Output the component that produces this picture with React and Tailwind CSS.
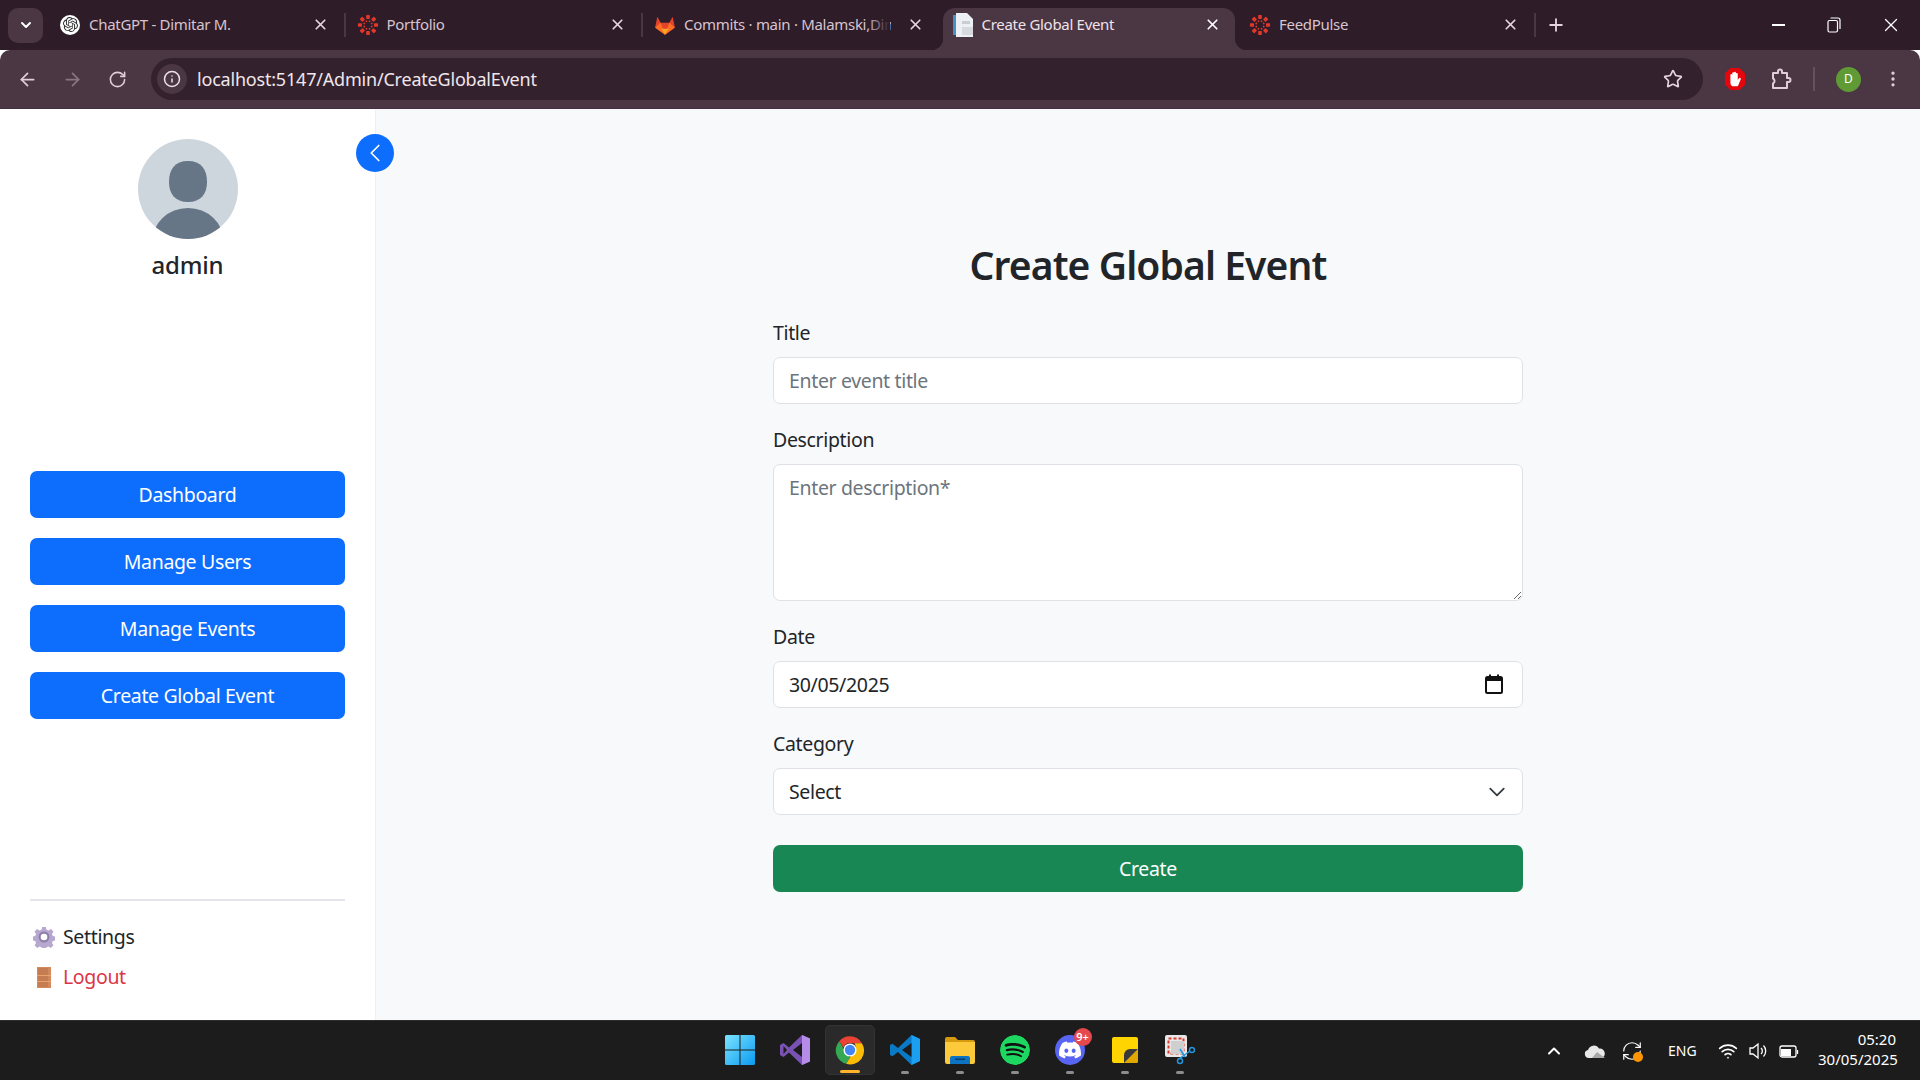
import { ArrowLeft, ArrowRight, RotateCw, RefreshCw, Info, Star, EllipsisVertical, ChevronDown, ChevronLeft, ChevronUp, X, Plus, Wifi } from 'lucide-react'
import { SiOpenai, SiSpotify, SiDiscord } from 'react-icons/si'

function CanvasIcon() {
  const dots = [0, 45, 90, 135, 180, 225, 270, 315]
  return (
    <svg width="22" height="22" viewBox="0 0 24 24">
      {dots.map(a => (
        <rect key={a} x="10" y="1" width="4" height="4.5" rx="0.8" fill="#e2382b" transform={`rotate(${a} 12 12)`} />
      ))}
      {dots.map(a => (
        <circle key={a} cx="12" cy="7.6" r="1" fill="#e2382b" transform={`rotate(${a + 22.5} 12 12)`} />
      ))}
    </svg>
  )
}

function ChatIcon() {
  return (
    <div className="w-5 h-5 rounded-full bg-white flex items-center justify-center">
      <SiOpenai size={15} color="#2a2a2a" />
    </div>
  )
}

function GitlabIcon() {
  return (
    <svg width="22" height="22" viewBox="0 0 24 24">
      <path d="M12 22.5 1.2 14.6 3.6 3l3.7 6.5h9.4L20.4 3l2.4 11.6z" fill="#e24329" />
      <path d="M12 22.5 7.3 9.5 1.2 14.6 4 17z" fill="#fc6d26" />
      <path d="M12 22.5l4.7-13 6.1 5.1-2.8 2.4z" fill="#fc6d26" />
      <path d="M12 22.5 7.8 16h8.4z" fill="#fca326" />
    </svg>
  )
}

function DocIcon() {
  return (
    <svg width="20" height="24" viewBox="0 0 20 24">
      <rect x="0" y="2" width="6" height="20" fill="#4a90c8" />
      <path d="M3 0h11l6 6v18H3z" fill="#eef1f4" />
      <rect x="9" y="8" width="8" height="3" fill="#c8ced4" />
      <rect x="9" y="14" width="11" height="8" fill="#d6dade" />
    </svg>
  )
}

function Tab({ icon, title, active, fade }) {
  return (
    <div className="w-[297.5px] shrink-0 h-full flex items-center relative">
      {active && (
        <>
          <div className="absolute left-[3px] right-[2px] top-0 bottom-0 bg-[#4b3644] rounded-t-[12px]" />
          <div className="absolute left-[-9px] bottom-0 w-[12px] h-[12px] bg-[radial-gradient(circle_at_0_0,transparent_12px,#4b3644_12.5px)]" />
          <div className="absolute right-[-10px] bottom-0 w-[12px] h-[12px] bg-[radial-gradient(circle_at_100%_0,transparent_12px,#4b3644_12.5px)]" />
        </>
      )}
      <div className="relative flex items-center w-full pl-[11px] pr-[16px] pb-[9px]">
        <div className="w-[24px] flex justify-center shrink-0">{icon}</div>
        <span className={`ml-[7px] w-[207px] overflow-hidden whitespace-nowrap text-[15px] tracking-[-0.3px] ${active ? 'text-[#efe3ea]' : 'text-[#d8c4d0]'}`}>
          {title}
        </span>
        <X size={17} strokeWidth={2.4} className={`ml-auto ${active ? 'text-white' : 'text-[#e4d5de]'}`} />
      </div>
      {fade && <div className="absolute right-[50px] top-0 bottom-[9px] w-[24px] bg-gradient-to-r from-transparent to-[#2e1c28]" />}
    </div>
  )
}

function TabSep() {
  return <div className="w-[2px] h-[24px] bg-[#4b3644] -mx-[1px] mb-[9px] shrink-0" />
}

function TabStrip() {
  return (
    <div className="h-[50px] bg-[#2e1c28] flex items-center shrink-0">
      <div className="w-[35px] h-[42px] ml-[8px] mr-[4px] flex items-center">
        <div className="w-[35px] h-[35px] rounded-[10px] bg-[#4b3644] flex items-center justify-center">
          <ChevronDown size={16} strokeWidth={3} className="text-white" />
        </div>
      </div>
      <div className="flex items-end h-[42px] mt-[8px]">
        <div className="flex items-center h-full">
          <Tab icon={<ChatIcon />} title="ChatGPT - Dimitar M." />
          <TabSep />
          <Tab icon={<CanvasIcon />} title="Portfolio" />
          <TabSep />
          <Tab icon={<GitlabIcon />} title="Commits · main · Malamski,Dimitar" fade />
          <Tab icon={<DocIcon />} title="Create Global Event" active />
          <Tab icon={<CanvasIcon />} title="FeedPulse" />
          <TabSep />
        </div>
      </div>
      <Plus size={20} strokeWidth={2.2} className="text-[#e4d5de] ml-[11px]" />
      <div className="ml-auto flex items-center h-full">
        <div className="w-[56px] flex justify-center"><div className="w-[13px] h-[1.5px] bg-white" /></div>
        <div className="w-[56px] flex justify-center">
          <svg width="14" height="16" viewBox="0 0 14 16" fill="none" stroke="white" strokeWidth="1.2">
            <rect x="1" y="3.5" width="9.5" height="11.5" rx="1.5" />
            <path d="M3.5 1h7.5a2 2 0 0 1 2 2v9" />
          </svg>
        </div>
        <div className="w-[58px] flex justify-center"><X size={22} strokeWidth={1.3} className="text-white" /></div>
      </div>
    </div>
  )
}

function StopIcon() {
  return (
    <svg width="22" height="24" viewBox="0 0 24 26">
      <path d="M7 1h10l6 6v12l-6 6H7l-6-6V7z" fill="#e4060d" />
      <path d="M7 14V8.5a1 1 0 0 1 2 0V13V6.5a1 1 0 0 1 2 0V13V6a1 1 0 0 1 2 0v7V7.5a1 1 0 0 1 2 0V14l1.5-2a1.1 1.1 0 0 1 1.8 1.2L15.5 20a2 2 0 0 1-1.8 1H11a4 4 0 0 1-4-4z" fill="white" />
    </svg>
  )
}

function PuzzleIcon() {
  return (
    <svg width="24" height="24" viewBox="0 0 24 24" fill="none" stroke="#dfcdd8" strokeWidth="2" strokeLinejoin="round" className="ml-[23px]">
      <path d="M4 6h5V4.500a2 2 0 0 1 4 0V6h5v5h1.500a2 2 0 0 1 0 4H18v6H4v-4.500a2.500 2.500 0 0 0 1.500-2.500A2.500 2.500 0 0 0 4 11.500z" />
    </svg>
  )
}

function Toolbar() {
  return (
    <div className="h-[59px] bg-[#4b3644] border-b border-[#443040] rounded-t-[10px] flex items-center shrink-0">
      <ArrowLeft size={21} className="text-[#dfcdd8] ml-[17px]" />
      <ArrowRight size={21} className="text-[#8b7583] ml-[24px]" />
      <RotateCw size={19} className="text-[#dfcdd8] ml-[25px]" />
      <div className="ml-[24px] w-[1552px] h-[42px] rounded-full bg-[#33212d] flex items-center pl-[6px] shrink-0">
        <div className="w-[30px] h-[30px] rounded-full bg-[#4b3644] flex items-center justify-center">
          <Info size={18} className="text-[#efe3ea]" />
        </div>
        <span className="ml-[10px] text-[18px] text-[#f0e6ec] tracking-[-0.2px]">localhost:5147/Admin/CreateGlobalEvent</span>
        <Star size={20} strokeWidth={2} className="ml-auto mr-[20px] text-[#e4d5de]" />
      </div>
      <div className="ml-[21px]"><StopIcon /></div>
      <PuzzleIcon />
      <div className="w-[2px] h-[24px] bg-[#65505e] ml-[20px]" />
      <div className="w-[25px] h-[25px] rounded-full bg-[#5f9a34] ml-[21px] text-white text-[12px] flex items-center justify-center">D</div>
      <EllipsisVertical size={20} className="ml-[22px] text-[#dfcdd8]" />
    </div>
  )
}

function NavButton({ children }) {
  return (
    <button className="h-[47px] rounded-[7px] bg-[#0d6efd] text-white text-[19.5px] tracking-[-0.35px] flex items-center justify-center">
      {children}
    </button>
  )
}

function Sidebar() {
  return (
    <aside className="w-[376px] shrink-0 bg-white border-r border-[#eef0f3] flex flex-col px-[30px] pt-[30px] pb-[28px] relative">
      <div className="flex flex-col items-center">
        <svg width="100" height="100" viewBox="0 0 100 100">
          <clipPath id="av"><circle cx="50" cy="50" r="50" /></clipPath>
          <circle cx="50" cy="50" r="50" fill="#ced6dd" />
          <g clipPath="url(#av)" fill="#667686">
            <path d="M50 22c13 0 19 8 19 21 0 12-6 20-19 20s-19-8-19-20c0-13 6-21 19-21z" />
            <ellipse cx="50" cy="103" rx="36" ry="34" />
          </g>
        </svg>
        <div className="mt-[8px] text-[24px] font-medium text-[#212529] leading-[36px] tracking-[-0.2px]">admin</div>
      </div>
      <div className="mt-[188px] flex flex-col gap-[20px]">
        <NavButton>Dashboard</NavButton>
        <NavButton>Manage Users</NavButton>
        <NavButton>Manage Events</NavButton>
        <NavButton>Create Global Event</NavButton>
      </div>
      <div className="mt-auto border-t-2 border-[#e3e5ea] pt-[21px] flex flex-col gap-[10px] text-[19.5px] tracking-[-0.35px]">
        <div className="flex items-center h-[30px] text-[#212529]">
          <svg width="22" height="22" viewBox="0 0 24 24" className="ml-[3px]">
            <path fill="#b6a8cf" d="M10 1h4l.7 3 2.2.9 2.6-1.6 2.8 2.8-1.6 2.6.9 2.2 3 .7v4l-3 .7-.9 2.2 1.6 2.6-2.8 2.8-2.6-1.6-2.2.9-.7 3h-4l-.7-3-2.2-.9-2.6 1.6-2.8-2.8 1.6-2.6-.9-2.2-3-.7v-4l3-.7.9-2.2-1.6-2.6 2.8-2.8 2.6 1.6 2.2-.9z" />
            <circle cx="12" cy="12" r="6" fill="#8f80aa" />
            <circle cx="12" cy="12" r="3.6" fill="#fff" />
          </svg>
          <span className="ml-[8px]">Settings</span>
        </div>
        <div className="flex items-center h-[30px] text-[#dc3545]">
          <svg width="14" height="21" viewBox="0 0 14 21" className="ml-[7px]">
            <rect width="14" height="21" fill="#d2895c" />
            <rect x="1" y="1" width="10" height="19" fill="#c67c52" />
            <rect y="8" width="14" height="1" fill="#eba36c" />
            <rect y="14" width="14" height="1" fill="#eba36c" />
          </svg>
          <span className="ml-[12px]">Logout</span>
        </div>
      </div>
      <button className="absolute left-[356px] top-[25px] z-10 w-[38px] h-[38px] rounded-full bg-[#0d6efd] flex items-center justify-center">
        <ChevronLeft size={30} strokeWidth={1.4} className="text-white" />
      </button>
    </aside>
  )
}

const fieldClass = 'w-full bg-white border border-[#dee2e6] rounded-[7px] px-[15px] text-[19.5px] tracking-[-0.35px] text-[#212529] placeholder:text-[#6c757d] outline-none'

function Field({ label, children, className }) {
  return (
    <div className={className}>
      <label className="block text-[19.5px] tracking-[-0.35px] leading-[30px] text-[#212529] mb-[9px]">{label}</label>
      {children}
    </div>
  )
}

function CreateForm() {
  return (
    <main className="flex-1 bg-[#f8f9fa] flex justify-center pt-[132px]">
      <form className="w-[750px]">
        <h2 className="text-[39px] leading-[48px] font-semibold tracking-[-0.9px] text-[#212529] text-center">Create Global Event</h2>
        <Field label="Title" className="mt-[29px]">
          <input className={`${fieldClass} h-[47px]`} placeholder="Enter event title" />
        </Field>
        <Field label="Description" className="mt-[21px]">
          <textarea className={`${fieldClass} block h-[137px] py-[8px] leading-[30px]`} placeholder="Enter description*" />
        </Field>
        <Field label="Date" className="mt-[21px]">
          <div className={`${fieldClass} h-[47px] flex items-center justify-between pr-[19px]`}>
            <span>30/05/2025</span>
            <svg width="18" height="20" viewBox="0 0 18 20" fill="none" className="-mt-[2px]">
              <rect x="1" y="3" width="16" height="16" rx="1.5" stroke="#111" strokeWidth="2" />
              <rect x="1" y="3" width="16" height="4" fill="#111" />
              <rect x="4" y="0.5" width="2" height="3" fill="#111" />
              <rect x="12" y="0.5" width="2" height="3" fill="#111" />
            </svg>
          </div>
        </Field>
        <Field label="Category" className="mt-[21px]">
          <div className={`${fieldClass} h-[47px] flex items-center justify-between pr-[16px]`}>
            <span>Select</span>
            <svg width="18" height="18" viewBox="0 0 16 16" fill="none" stroke="#343a40" strokeWidth="1.6" strokeLinecap="round" strokeLinejoin="round">
              <path d="m2 5 6 6 6-6" />
            </svg>
          </div>
        </Field>
        <button type="button" className="mt-[30px] w-full h-[47px] rounded-[7px] bg-[#198754] text-white text-[19.5px] tracking-[-0.35px]">Create</button>
      </form>
    </main>
  )
}

function TaskIcon({ children, dot, active }) {
  return (
    <div className={`w-[50px] h-[50px] mx-[2.5px] rounded-[5px] relative flex items-center justify-center ${active ? 'bg-[#2a2a2a] border border-[#333]' : ''}`}>
      {children}
      {dot && <div className={`absolute bottom-[1px] left-1/2 -translate-x-1/2 h-[3.5px] rounded-full ${active ? 'w-[20px] bg-[#ffb32c]' : 'w-[8px] bg-[#8c8c8c]'}`} />}
    </div>
  )
}

function Taskbar() {
  return (
    <div className="h-[60px] bg-[#1c1c1c] border-t border-[#2e2e2e] flex items-center relative shrink-0">
      <div className="flex-1" />
      <div className="flex items-center absolute left-[712px] top-[4px]">
        <TaskIcon>
          <svg width="30" height="30" viewBox="0 0 30 30">
            <defs><linearGradient id="win" x1="0" y1="0" x2="1" y2="1"><stop offset="0" stopColor="#7be3ff" /><stop offset="1" stopColor="#0b9bf0" /></linearGradient></defs>
            <path fill="url(#win)" d="M0 1.500A1.500 1.500 0 0 1 1.500 0h13v14.500H0zM15.500 0h13A1.500 1.500 0 0 1 30 1.500v13H15.500zM0 15.500h14.500V30h-13A1.500 1.500 0 0 1 0 28.500zM15.500 15.500H30v13a1.500 1.500 0 0 1-1.500 1.500h-13z" />
          </svg>
        </TaskIcon>
        <TaskIcon>
          <svg width="30" height="30" viewBox="0 0 30 30">
            <path d="M22 0l8 3.500v23L22 30 9 17.500 3.500 22 0 20V10l3.500-2L9 12.500z" fill="#7a52b3" />
            <path d="M22 0l8 3.500v23L22 30z" fill="#b58ce8" />
            <path d="M22 8v14l-9-7z" fill="#1c1c1c" />
            <path d="M3.500 11v8L7 15z" fill="#1c1c1c" />
          </svg>
        </TaskIcon>
        <TaskIcon active dot>
          <svg width="30" height="30" viewBox="0 0 48 48">
            <path d="M24 2a22 22 0 0 1 19 11H24a11 11 0 0 0-10.500 7.500L6.800 10A22 22 0 0 1 24 2z" fill="#ea4335" />
            <path d="M6.800 10l9.500 16.500A11 11 0 0 0 24 35l-6 11A22 22 0 0 1 6.800 10z" fill="#34a853" />
            <path d="M43 13a22 22 0 0 1-25 33l9.500-16.500A11 11 0 0 0 33 18.500 11 11 0 0 0 31 13z" fill="#fbbc05" />
            <circle cx="24" cy="24" r="10.500" fill="#fff" />
            <circle cx="24" cy="24" r="8.300" fill="#4285f4" />
          </svg>
        </TaskIcon>
        <TaskIcon dot>
          <svg width="30" height="30" viewBox="0 0 30 30">
            <path d="M21.500 0L30 4v22l-8.500 4L8 17l-5.500 4.200L0 20v-10l2.500-1.200L8 13z" fill="#0a7ac6" />
            <path d="M21.500 0L30 4v22l-8.500 4z" fill="#1c9ff0" />
            <path d="M21.500 8v14L12 15z" fill="#1c1c1c" />
          </svg>
        </TaskIcon>
        <TaskIcon dot>
          <svg width="30" height="28" viewBox="0 0 30 28">
            <path d="M0 3a2 2 0 0 1 2-2h8l3 3h15a2 2 0 0 1 2 2v4H0z" fill="#d69a11" />
            <path d="M0 6h30v20a2 2 0 0 1-2 2H2a2 2 0 0 1-2-2z" fill="#fbc93a" />
            <path d="M5 28v-6a2 2 0 0 1 2-2h16a2 2 0 0 1 2 2v6z" fill="#0d74c4" />
            <rect x="10" y="22.500" width="10" height="1.500" fill="#073e6d" />
          </svg>
        </TaskIcon>
        <TaskIcon dot>
          <SiSpotify size={30} color="#1ed760" className="bg-[#111] rounded-full" />
        </TaskIcon>
        <TaskIcon dot>
          <div className="w-[30px] h-[30px] rounded-full bg-[#5865f2] flex items-center justify-center">
            <SiDiscord size={22} color="white" />
          </div>
          <div className="absolute top-[3px] right-[3px] w-[18px] h-[18px] rounded-full bg-[#e5484d] text-white text-[11px] font-semibold flex items-center justify-center">9+</div>
        </TaskIcon>
        <TaskIcon dot>
          <svg width="26" height="26" viewBox="0 0 26 26">
            <rect width="26" height="26" rx="2" fill="#ffd400" />
            <path d="M26 12v12a2 2 0 0 1-2 2H12z" fill="#e0a800" />
            <path d="M26 12H18a6 6 0 0 0-6 6v8z" fill="#3a3a3a" />
          </svg>
        </TaskIcon>
        <TaskIcon dot>
          <svg width="30" height="30" viewBox="0 0 30 30">
            <rect x="0" y="0" width="22" height="22" rx="2" fill="#e8e8e8" />
            <rect x="3.500" y="3.500" width="15" height="15" fill="none" stroke="#d83b2e" strokeWidth="2" strokeDasharray="3 2" />
            <rect x="6" y="6" width="13" height="13" fill="#cfcfcf" />
            <path d="M15 14l5 8M14 24l11-8" stroke="#2296dc" strokeWidth="1.500" fill="none" />
            <circle cx="15" cy="26" r="2.500" fill="none" stroke="#2296dc" strokeWidth="1.500" />
            <circle cx="27" cy="15" r="2.500" fill="none" stroke="#2296dc" strokeWidth="1.500" />
          </svg>
        </TaskIcon>
      </div>
      <div className="flex items-center text-white">
        <ChevronUp size={20} strokeWidth={2.4} />
        <svg width="22" height="14" viewBox="0 0 22 14" className="ml-[20px]">
          <path d="M5 14a4 4 0 0 1-1-7.900 6 6 0 0 1 11-1.500 5 5 0 0 1 3 9.400z" fill="#e8e8e8" />
          <path d="M8 14l5-6 8 6z" fill="#a8a8a8" />
        </svg>
        <div className="relative ml-[15px] w-[22px] h-[22px]">
          <RefreshCw size={22} strokeWidth={1.3} className="text-white" />
          <div className="absolute right-0 bottom-0 w-[10px] h-[10px] rounded-full bg-[#ff9500]" />
        </div>
        <span className="ml-[25px] text-[14px] w-[30px]">ENG</span>
        <Wifi size={20} strokeWidth={2} className="ml-[20px]" />
        <svg width="20" height="20" viewBox="0 0 20 20" fill="none" stroke="white" strokeWidth="1.3" className="ml-[10px]">
          <path d="M2 7h3l5-4v14l-5-4H2z" />
          <path d="M13 7a4 4 0 0 1 0 6M15.500 4.500a8 8 0 0 1 0 11" />
        </svg>
        <svg width="20" height="16" viewBox="0 0 20 16" fill="none" stroke="white" strokeWidth="1.3" className="ml-[11px]">
          <rect x="1" y="3" width="16" height="11" rx="2" />
          <rect x="2" y="6" width="10" height="7" fill="white" stroke="none" />
          <path d="M18.500 7v4" />
        </svg>
        <div className="ml-[19px] mr-[24px] -mt-[3px] w-[78px] text-right text-[15px] leading-[20px] whitespace-nowrap">
          <div>05:20</div>
          <div>30/05/2025</div>
        </div>
      </div>
    </div>
  )
}

export default function App() {
  return (
    <div className="h-[1080px] w-[1920px] overflow-hidden flex flex-col font-['Noto_Sans',sans-serif]">
      <TabStrip />
      <Toolbar />
      <div className="flex-1 flex min-h-0">
        <Sidebar />
        <CreateForm />
      </div>
      <Taskbar />
    </div>
  )
}
